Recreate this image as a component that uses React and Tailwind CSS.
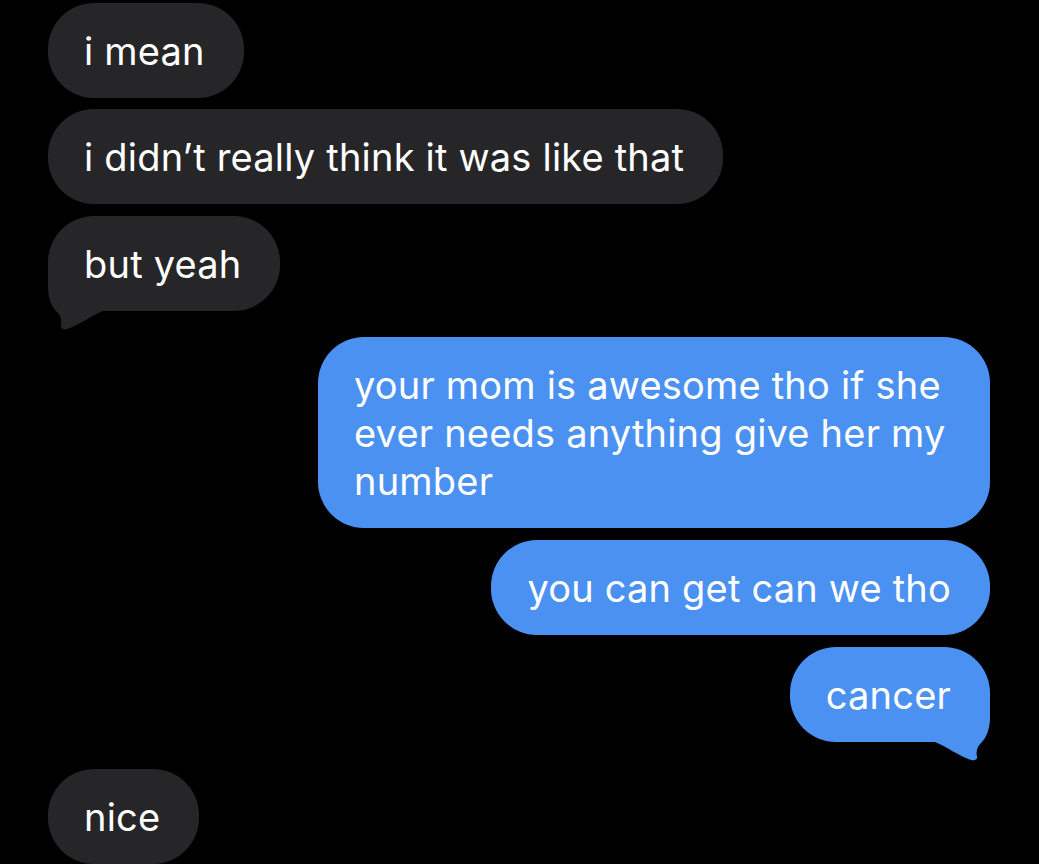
import React from 'react';

const messages = [
  { id: 1, from: 'them', text: 'i mean', mt: 'mt-0' },
  { id: 2, from: 'them', text: 'i didn’t really think it was like that', mt: 'mt-[11px]' },
  { id: 3, from: 'them', text: 'but yeah', mt: 'mt-[12px]', tail: true },
  { id: 4, from: 'me', text: 'your mom is awesome tho if she ever needs anything give her my number', mt: 'mt-[26px]' },
  { id: 5, from: 'me', text: 'you can get can we tho', mt: 'mt-[12px]' },
  { id: 6, from: 'me', text: 'cancer', mt: 'mt-[12px]', tail: true },
  { id: 7, from: 'them', text: 'nice', mt: 'mt-[27px]' },
];

function Tail({ side, color }) {
  // drawn for the right side, mirrored for the left
  return (
    <svg
      width="60"
      height="66"
      viewBox="0 0 60 66"
      className={`absolute bottom-[-22px] ${side === 'right' ? 'right-[-5px]' : 'left-[-5px] -scale-x-100'}`}
    >
      <path
        d="M0 0 L55 0 L55 19 C55 32 51 40 46 45 C42 49 41 54 42 58 C43 61 40 63 36 62 C24 58 12 49 0 44 Z"
        fill={color}
      />
    </svg>
  );
}

function Bubble({ msg }) {
  const mine = msg.from === 'me';
  const bg = mine ? '#4a91f2' : '#262628';
  return (
    <div className={`flex ${mine ? 'justify-end' : 'justify-start'} ${msg.mt}`}>
      <div
        className={`relative rounded-[46px] pl-[36px] pr-[39px] py-[23.5px] text-white text-[38px] leading-[48px] tracking-[0.2px] ${
          mine ? 'max-w-[672px] bg-[#4a91f2]' : 'max-w-[720px] bg-[#262628]'
        }`}
      >
        {msg.tail && <Tail side={mine ? 'right' : 'left'} color={bg} />}
        <span className="relative">{msg.text}</span>
      </div>
    </div>
  );
}

export default function App() {
  return (
    <div
      className="w-[1039px] h-[864px] overflow-hidden bg-black pt-[3px] pl-[48px] pr-[49px]"
      style={{ fontFamily: 'Inter, "Noto Sans", sans-serif' }}
    >
      {messages.map((m) => (
        <Bubble key={m.id} msg={m} />
      ))}
    </div>
  );
}
